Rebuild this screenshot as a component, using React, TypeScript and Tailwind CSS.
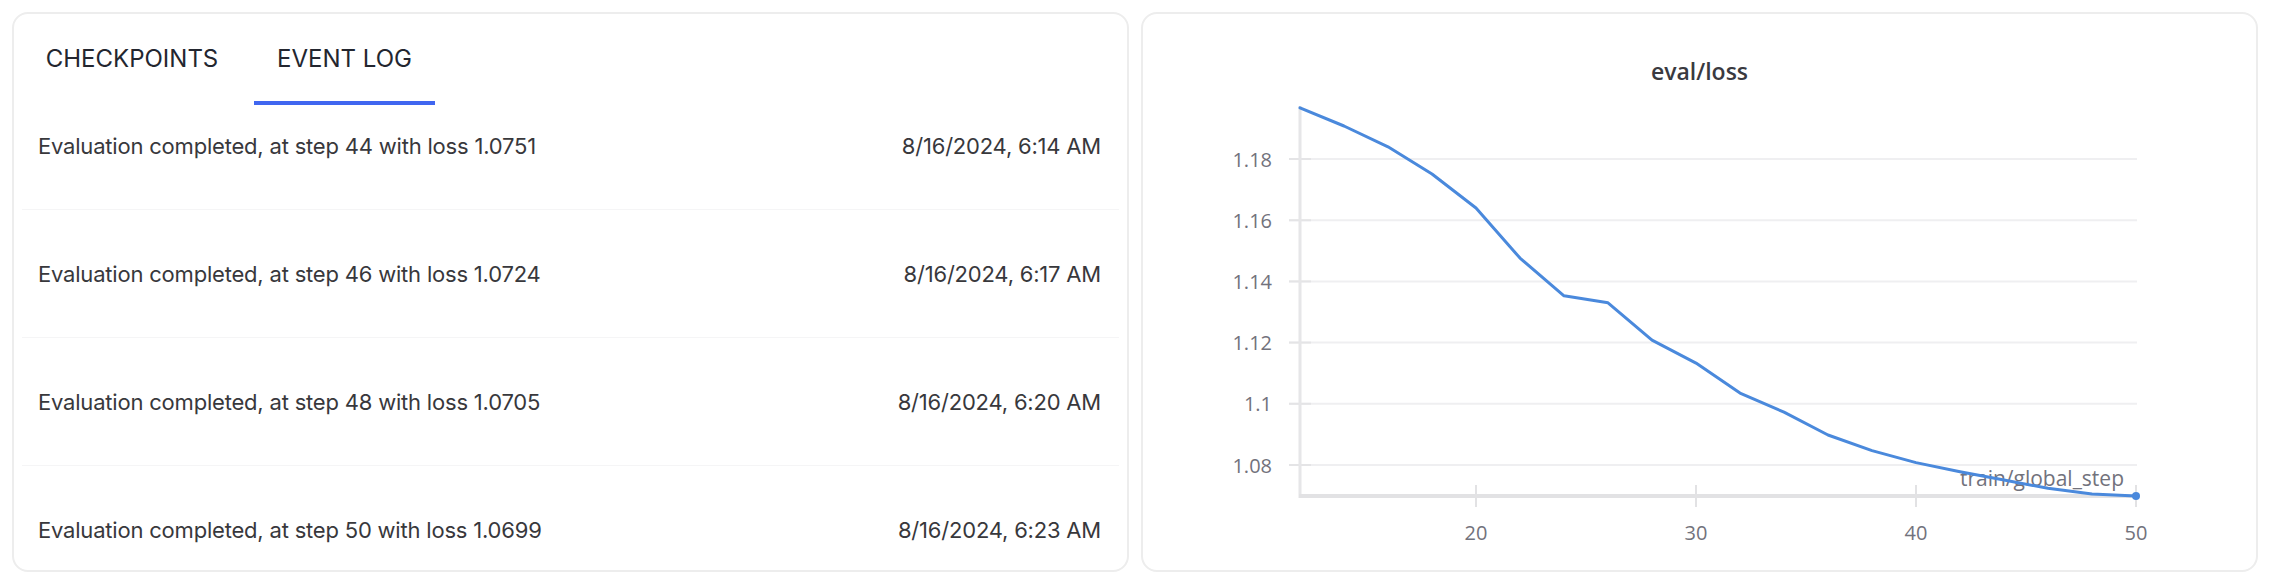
import React, { useState } from 'react';

type Event = { step: number; loss: string; time: string };

const EVENTS: Event[] = [
  { step: 44, loss: '1.0751', time: '8/16/2024, 6:14 AM' },
  { step: 46, loss: '1.0724', time: '8/16/2024, 6:17 AM' },
  { step: 48, loss: '1.0705', time: '8/16/2024, 6:20 AM' },
  { step: 50, loss: '1.0699', time: '8/16/2024, 6:23 AM' },
];

// eval/loss by train/global_step
const LOSS: [number, number][] = [
  [12, 1.1967], [14, 1.1908], [16, 1.184], [18, 1.1751], [20, 1.164],
  [22, 1.1476], [24, 1.1353], [26, 1.133], [28, 1.1208], [30, 1.1133],
  [32, 1.1035], [34, 1.0973], [36, 1.0898], [38, 1.0847], [40, 1.0808],
  [42, 1.0778], [44, 1.0751], [46, 1.0724], [48, 1.0705], [50, 1.0699],
];

const X0 = 157;
const X1 = 993;
const AXIS_Y = 410;
const sx = (s: number) => X0 + (s - 12) * 22;
const sy = (v: number) => 379 - (v - 1.08) * 3060;

function LossChart() {
  const yTicks = [1.18, 1.16, 1.14, 1.12, 1.1, 1.08];
  const xTicks = [20, 30, 40, 50];
  const path = LOSS.map(([s, v], i) => `${i ? 'L' : 'M'}${sx(s).toFixed(1)},${sy(v).toFixed(1)}`).join(' ');
  const font = "'Open Sans', sans-serif";

  return (
    <svg width="1112" height="470" viewBox="0 0 1112 470" className="block">
      {/* grid */}
      {yTicks.map(t => (
        <g key={t}>
          <line x1={146} x2={X1 + 1} y1={sy(t)} y2={sy(t)} stroke="#efeff1" strokeWidth="2" />
          <line x1={146} x2={168} y1={sy(t)} y2={sy(t)} stroke="#e4e4e6" strokeWidth="2" />
          <text x={129} y={sy(t)} textAnchor="end" dominantBaseline="central" fontFamily={font} fontSize="20" fill="#72727c">
            {String(t)}
          </text>
        </g>
      ))}

      {/* axes */}
      <line x1={X0} x2={X0} y1={20} y2={AXIS_Y + 2} stroke="#e6e6e8" strokeWidth="3" />
      <line x1={X0 - 1} x2={X1 + 1} y1={AXIS_Y} y2={AXIS_Y} stroke="#e2e2e4" strokeWidth="4" />
      {xTicks.map(t => (
        <g key={t}>
          <line x1={sx(t)} x2={sx(t)} y1={399} y2={421} stroke="#e2e2e4" strokeWidth="2" />
          <text x={sx(t)} y={446} textAnchor="middle" dominantBaseline="central" fontFamily={font} fontSize="20" fill="#72727c">
            {t}
          </text>
        </g>
      ))}
      <text x={981} y={392} textAnchor="end" dominantBaseline="central" fontFamily={font} fontSize="21" fill="#72727c">
        train/global_step
      </text>

      {/* series */}
      <path d={path} fill="none" stroke="#4a89dc" strokeWidth="3" strokeLinejoin="round" strokeLinecap="round" />
      <circle cx={sx(50)} cy={sy(1.0699)} r="4" fill="#4a89dc" />
    </svg>
  );
}

export default function App() {
  const [tab, setTab] = useState<'checkpoints' | 'events'>('events');

  return (
    <div className="w-[2270px] h-[584px] bg-white flex gap-[12px] p-[12px]">
      {/* Event log card */}
      <div className="flex-1 min-w-0 rounded-[16px] border-2 border-[#ededed] overflow-hidden flex flex-col font-['Inter',sans-serif]">
        <div className="flex ml-[6px] gap-[10px] h-[91px] shrink-0">
          <button
            onClick={() => setTab('checkpoints')}
            className={`w-[224px] pt-[3px] flex items-center justify-center border-b-4 text-[24px] text-[#23262f] ${tab === 'checkpoints' ? 'border-[#4066f0]' : 'border-transparent'}`}
          >
            CHECKPOINTS
          </button>
          <button
            onClick={() => setTab('events')}
            className={`w-[181px] pt-[3px] flex items-center justify-center border-b-4 text-[24px] text-[#23262f] ${tab === 'events' ? 'border-[#4066f0]' : 'border-transparent'}`}
          >
            EVENT LOG
          </button>
        </div>

        <div className="px-[8px] flex-1 min-h-0 overflow-hidden">
          {EVENTS.map((e, i) => (
            <div
              key={e.step}
              className={`flex justify-between pl-4 pr-[18px] border-b border-[#f5f5f6] text-[22px] leading-[30px] tracking-[-0.2px] text-[#38383c] ${i === 0 ? 'h-[105px] items-start pt-[26px]' : 'h-[128px] items-center'}`}
            >
              <span>Evaluation completed, at step {e.step} with loss {e.loss}</span>
              <span>{e.time}</span>
            </div>
          ))}
        </div>
      </div>

      {/* Chart card */}
      <div className="flex-1 min-w-0 rounded-[16px] border-2 border-[#ededed] overflow-hidden flex flex-col">
        <div className="pt-[42px] text-center text-[23px] leading-[30px] font-semibold text-[#3a3a40] font-['Open_Sans',sans-serif]">
          eval/loss
        </div>
        <LossChart />
      </div>
    </div>
  );
}
